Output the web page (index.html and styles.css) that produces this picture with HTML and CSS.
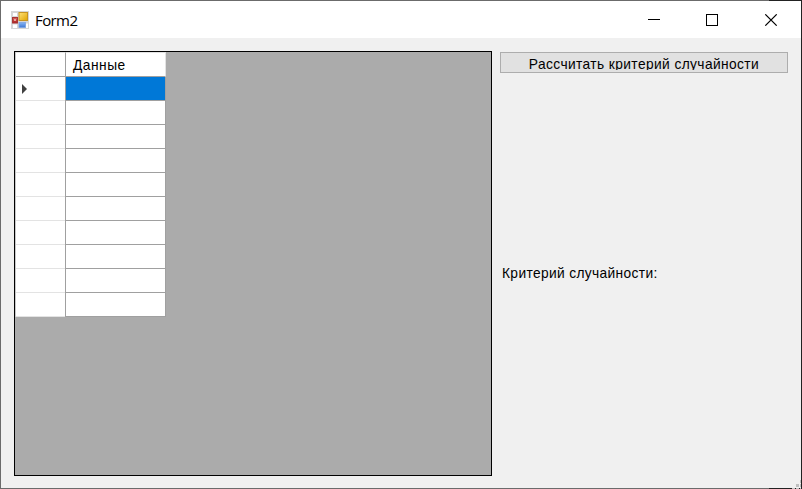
FILE: index.html
```html
<!DOCTYPE html>
<html lang="ru">
<head>
<meta charset="utf-8">
<title>Form2</title>
<link rel="stylesheet" href="styles.css">
</head>
<body>
<div class="window">
  <header class="titlebar">
    <svg class="app-icon" width="18" height="18" viewBox="0 0 18 18">
      <defs>
        <linearGradient id="gold" x1="0" y1="0" x2="1" y2="1"><stop offset="0" stop-color="#ffe27a"/><stop offset="1" stop-color="#e0a400"/></linearGradient>
        <linearGradient id="red" x1="0" y1="0" x2="0" y2="1"><stop offset="0" stop-color="#dc6a60"/><stop offset="1" stop-color="#a81c1c"/></linearGradient>
        <linearGradient id="blue" x1="0" y1="0" x2="0" y2="1"><stop offset="0" stop-color="#86b4f4"/><stop offset="1" stop-color="#3f78d4"/></linearGradient>
      </defs>
      <rect width="18" height="18" fill="#d6d6d6"/>
      <path d="M2 2h4v3H2zM2 13.5h4V17H2zM15 12.500h2V17h-2z" fill="#fff"/>
      <rect x="8" y="1.500" width="8.500" height="8" fill="url(#gold)" stroke="#c79422"/>
      <rect x="1.500" y="6.500" width="5" height="5.500" fill="url(#red)" stroke="#a83434"/>
      <rect x="3" y="8" width="2" height="2" fill="#eba79f"/>
      <rect x="8" y="11.500" width="6.500" height="5" fill="url(#blue)" stroke="#7ca5e4" stroke-width=".8"/>
    </svg>
    <span class="title">Form2</span>
    <svg class="controls" width="130" height="12" viewBox="0 0 130 12" fill="none" stroke="#000">
      <path d="M0 5.5h12M58.5.5h11v11h-11z" shape-rendering="crispEdges"/>
      <path d="M117.3.3l11.4 11.4M128.7.3l-11.4 11.4" stroke-width="1.15"/>
    </svg>
  </header>
  <main class="client">
    <section class="grid-view">
      <div class="table">
        <div class="corner"></div><div class="column-head">Данные</div>
        <div class="row-head"><svg width="5" height="10" viewBox="0 0 5 10"><path d="M0 0l5 5-5 5z" fill="#404040"/></svg></div><div class="cell selected"></div>
        <div class="row-head"></div><div class="cell"></div>
        <div class="row-head"></div><div class="cell"></div>
        <div class="row-head"></div><div class="cell"></div>
        <div class="row-head"></div><div class="cell"></div>
        <div class="row-head"></div><div class="cell"></div>
        <div class="row-head"></div><div class="cell"></div>
        <div class="row-head"></div><div class="cell"></div>
        <div class="row-head"></div><div class="cell"></div>
        <div class="row-head"></div><div class="cell"></div>
      </div>
    </section>
    <aside class="side">
      <button class="calculate"><span>Рассчитать критерий случайности</span></button>
      <p class="result">Критерий случайности:</p>
    </aside>
  </main>
  <svg class="grip" width="9" height="9" fill="#bfbfbf" shape-rendering="crispEdges"><path d="M8 0h1v3H8zM4 4h3v3H4zM8 4h1v3H8zM0 8h3v1H0zM4 8h3v1H4zM8 8h1v1H8z"/></svg>
</div>
</body>
</html>
```
FILE: styles.css
```css
* { box-sizing: border-box; }
body { margin: 0; }
.window {
  position: relative;
  width: 802px;
  height: 489px;
  padding: 1px;
  background:
    linear-gradient(#222, #222) right top / 33px 1px no-repeat,
    linear-gradient(#222, #222) right top / 1px 100% no-repeat,
    linear-gradient(#222, #222) right bottom / 33px 1px no-repeat,
    #6b6b6b;
  font: 13.75px "Liberation Sans", Arial, sans-serif;
  color: #000;
  overflow: hidden;
}
.titlebar {
  display: flex;
  align-items: center;
  height: 37px;
  padding: 0 23px 0 10px;
  background: #fff;
}
.title {
  margin-left: 6px;
  font: 15px/20px "Open Sans", sans-serif;
  letter-spacing: -0.6px;
}
.controls { margin-left: auto; }
.client {
  display: flex;
  gap: 8px;
  height: 450px;
  padding: 13px 13px 12px;
  background: #f0f0f0;
}
.grid-view {
  width: 478px;
  height: 425px;
  border: 1px solid #000;
  background: #ababab;
}
.table {
  display: grid;
  grid-template-columns: 50px 100px;
  grid-template-rows: 25px;
  grid-auto-rows: 24px;
  width: 151px;
  border-left: 1px solid #c8c8c8;
}
.corner, .column-head, .cell {
  border-right: 1px solid #a0a0a0;
  border-bottom: 1px solid #a0a0a0;
  background: #fff;
}
.corner { border-top: 1px solid #e3e3e3; }
.column-head {
  padding: 1px 0 0 7px;
  border-top: 1px solid #e3e3e3;
  border-right-color: #e3e3e3;
  line-height: 23px;
  letter-spacing: 0.5px;
}
.row-head {
  display: flex;
  align-items: center;
  padding-left: 6px;
  background:
    linear-gradient(#a0a0a0, #a0a0a0) right / 1px 100% no-repeat,
    linear-gradient(#e3e3e3, #e3e3e3) bottom / 100% 1px no-repeat,
    #fff;
}
.selected { background: #0078d7; }
.side { flex: 1; padding-top: 1px; }
.calculate {
  display: block;
  width: 288px;
  height: 21px;
  padding: 3px 1px 2px;
  border: 1px solid #adadad;
  background: #e1e1e1;
  color: #000;
  font: inherit;
  letter-spacing: 0.4px;
}
.calculate span {
  display: block;
  height: 14px;
  line-height: 17px;
  overflow: hidden;
  white-space: nowrap;
}
.result {
  margin: 192px 0 0 2px;
  line-height: 17px;
  letter-spacing: 0.36px;
}
.grip { position: absolute; right: 1px; bottom: 0; }
```
